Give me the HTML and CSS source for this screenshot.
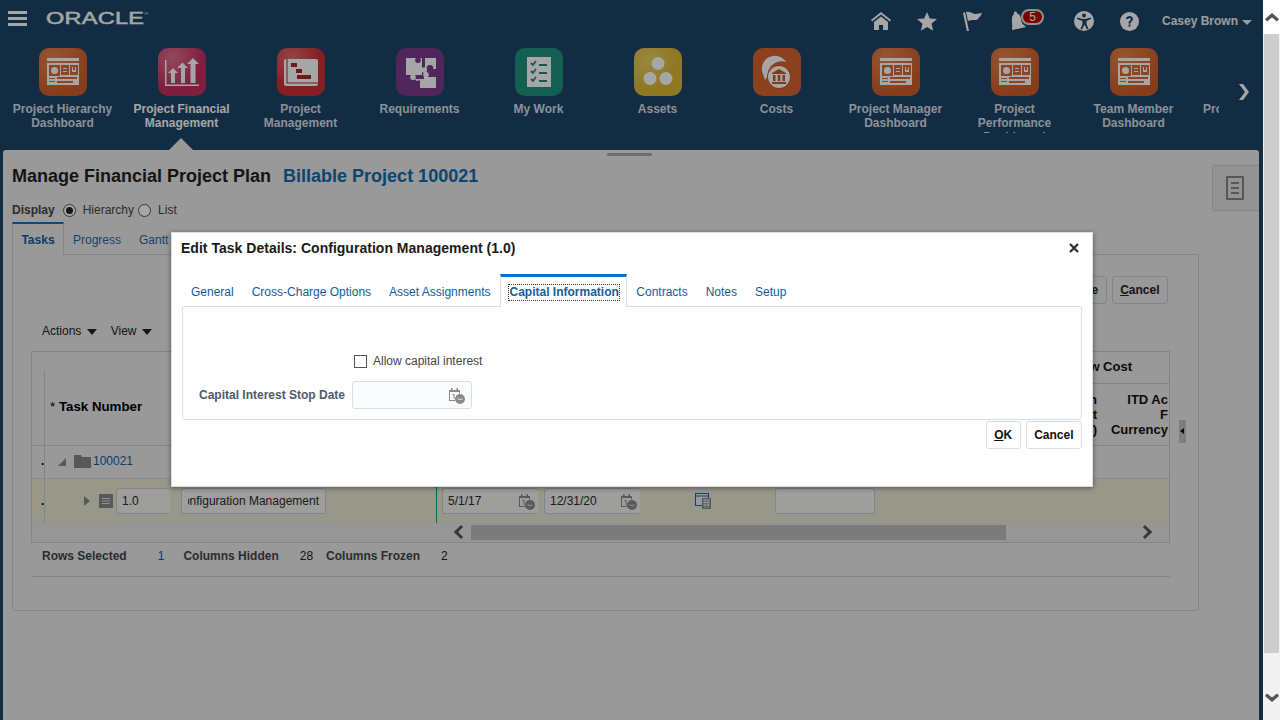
FILE: index.html
```html
<!DOCTYPE html>
<html lang="en">
<head>
    <meta charset="UTF-8">
    <title>Manage Financial Project Plan</title>
    <link rel="stylesheet" href="styles.css">
</head>
<body>
    <svg class="defs" width="0" height="0">
        <symbol id="dash" viewBox="0 0 48 48">
            <rect x="8" y="10" width="32" height="3" fill="#fff"/>
            <rect x="8" y="15" width="32" height="22" fill="#fff"/>
            <rect x="10" y="17" width="11" height="11" fill="currentColor"/>
            <circle cx="15.5" cy="22.5" r="3.5" fill="#fff"/>
            <rect x="22" y="17" width="8" height="10" fill="currentColor"/>
            <rect x="24" y="20" width="4" height="1" fill="#fff"/>
            <rect x="24" y="23" width="4" height="1" fill="#fff"/>
            <rect x="31" y="17" width="8" height="10" fill="currentColor"/>
            <path d="M33 19v5h4v-5h-1v3h-2v-3z" fill="#fff"/>
            <rect x="10" y="30" width="6" height="1" fill="currentColor"/>
            <rect x="10" y="33" width="6" height="1" fill="currentColor"/>
            <rect x="18" y="29" width="20" height="2" fill="currentColor"/>
            <rect x="18" y="33" width="16" height="2" fill="currentColor"/>
        </symbol>
        <symbol id="cal" viewBox="0 0 17 17">
            <path d="M1 3h2V1h1.500v2h4V1H10v2h2v3.500h-1V5H2v8h5v1H1z" fill="#8a8a8a"/>
            <path d="M4.500 7H6.500v5H5.500V8H4.500z" fill="#8a8a8a"/>
            <circle cx="12" cy="12" r="5" fill="#8a8a8a"/>
            <path d="M9.500 11.500l2.500 1.200 2.500-.7" fill="none" stroke="#e4e4e4"/>
        </symbol>
    </svg>

    <div class="app">
        <header class="topbar">
            <svg class="burger" width="19" height="15" viewBox="0 0 19 15"><path d="M0 0h19v3H0zM0 6h19v3H0zM0 12h19v3H0z" fill="#fff"/></svg>
            <div class="logo">ORACLE<sup>®</sup></div>
            <div class="topicons">
                <svg class="ti" width="20" height="18" viewBox="0 0 20 18"><path d="M10 0L0 8l1 1.500L10 2.500l9 7 1-1.500zM3 10v8h5v-5h4v5h5v-8L10 4.500z" fill="#fff"/></svg>
                <svg class="ti" width="20" height="19" viewBox="0 0 20 19"><path d="M10 0l2.800 6.500 7.200.6-5.500 4.600 1.700 7L10 15l-6.200 3.700 1.700-7L0 7.100l7.200-.6z" fill="#fff"/></svg>
                <svg class="ti" width="20" height="20" viewBox="0 0 20 20"><path d="M0 2l2-1 4 19-2 .5zM3 1c4-1 6 2 9 2s5-1 7-1c-1 3-3 4-4 6-2 2-6 0-10 2z" fill="#fff"/></svg>
                <div class="bell">
                    <svg width="19" height="20" viewBox="0 0 19 20"><path d="M4 1c2-1 3 0 3 1.500 4 1 4 5 4.500 8 .5 2.500 3 4 4.500 5.500L2 19c0-2 .5-4 0-7 0-4-.5-6.500 2-9z" fill="#fff"/></svg>
                    <span class="badge">5</span>
                </div>
                <svg class="ti" width="20" height="20" viewBox="0 0 20 20"><circle cx="10" cy="10" r="10" fill="#fff"/><circle cx="10" cy="4.500" r="2" fill="#1c4467"/><path d="M3.500 6.500l5 1.500h3l5-1.500.5 1.500-4.500 2v3l2 5-1.500.5-2.500-5-2.500 5-1.500-.5 2-5v-3L3 8z" fill="#1c4467"/></svg>
                <svg class="ti" width="19" height="19" viewBox="0 0 19 19"><circle cx="9.500" cy="9.500" r="9.500" fill="#fff"/><path d="M6 7c0-2 2-3 3.500-3s3.500 1 3.500 3-2.500 2.500-2.500 4.500h-2c0-3 2.500-3 2.500-4.500 0-1-3-1-3 0z" fill="#1c4467"/><rect x="8.500" y="12.500" width="2" height="2" fill="#1c4467"/></svg>
                <span class="username">Casey Brown</span>
                <span class="caret"></span>
            </div>
        </header>

        <nav class="tray">
            <a class="tile"><span class="tile-icon orange"><svg width="48" height="48"><use href="#dash"/></svg></span>Project Hierarchy Dashboard</a>
            <a class="tile active"><span class="tile-icon pink">
                <svg width="48" height="48" viewBox="0 0 48 48"><path d="M7 12v26h34v-1.500H8.500V12z" fill="#fff"/><path d="M10 25l5-5 5 5h-3v10h-4V25zM19 20l5.500-5.500L30 20h-3v15h-4V20zM29 16l6-6 6 6h-3.500v19h-5V16z" fill="#fff"/></svg>
            </span>Project Financial Management</a>
            <a class="tile"><span class="tile-icon red">
                <svg width="48" height="48" viewBox="0 0 48 48"><rect x="7" y="11" width="34" height="27" rx="2" fill="#fff"/><path d="M9.500 11v24.500H41v-1H10.500V11z" fill="#a52a2a"/><rect x="14" y="15" width="6" height="4" fill="#a52a2a"/><rect x="19" y="21" width="6" height="4" fill="#a52a2a"/><rect x="20" y="27" width="14" height="4" fill="#a52a2a"/></svg>
            </span>Project Management</a>
            <a class="tile"><span class="tile-icon purple">
                <svg width="48" height="48" viewBox="0 0 48 48"><path d="M10 10h10c-2 3 0 5 2 5s4-2 2-5h2v10c3-2 5 0 5 2 0 3-3 4-5 2v3H19c2 3 0 5-2 5s-4-2-2-5h-5z" fill="#fff"/><path d="M29 10h11v11h-3c1-3-1-4-3-4s-4 1-3 4h-2z" fill="#fff"/><path d="M28 29c-2-3 0-5 2-5s4 2 2 5h8v11H24v-8c-3 2-5 0-5-1h9z" fill="#fff"/></svg>
            </span>Requirements</a>
            <a class="tile"><span class="tile-icon teal">
                <svg width="48" height="48" viewBox="0 0 48 48"><rect x="12" y="9" width="24" height="30" fill="#fff"/><path d="M16 15l2 2 3-4M16 23l2 2 3-4M16 31l2 2 3-4" fill="none" stroke="#1f8a7c" stroke-width="1.800"/><path d="M24 16h8v2h-8zM24 24h8v2h-8zM24 32h8v2h-8z" fill="#1f8a7c"/></svg>
            </span>My Work</a>
            <a class="tile"><span class="tile-icon yellow">
                <svg width="48" height="48" viewBox="0 0 48 48"><circle cx="24" cy="15.500" r="6.500" fill="#fff"/><circle cx="16" cy="30.500" r="6.500" fill="#fff"/><circle cx="32" cy="30.500" r="6.500" fill="#fff"/></svg>
            </span>Assets</a>
            <a class="tile"><span class="tile-icon rust">
                <svg width="48" height="48" viewBox="0 0 48 48"><path d="M10 26A13 13 0 0 1 33 14c-9-3-19 4-18 14l-3 4z" fill="#fff"/><circle cx="26" cy="29" r="12" fill="#c35a2b"/><circle cx="26" cy="29" r="11" fill="#fff"/><path d="M26 21l7 4v1H19v-1zM20 27h2.500v6H20zM24.800 27h2.500v6h-2.500zM29.500 27H32v6h-2.500zM19 34h14v2H19z" fill="#c35a2b"/></svg>
            </span>Costs</a>
            <a class="tile"><span class="tile-icon orange"><svg width="48" height="48"><use href="#dash"/></svg></span>Project Manager Dashboard</a>
            <a class="tile"><span class="tile-icon orange"><svg width="48" height="48"><use href="#dash"/></svg></span>Project Performance Dashboard</a>
            <a class="tile"><span class="tile-icon orange"><svg width="48" height="48"><use href="#dash"/></svg></span>Team Member Dashboard</a>
            <a class="tile tile-cut"><span class="tile-label">Project</span></a>
            <svg class="tray-next" width="12" height="16" viewBox="0 0 12 16"><path d="M1 0h4l6 8-6 8H1l6-8z" fill="#fff"/></svg>
        </nav>

        <main class="content">
            <div class="splitter"></div>
            <div class="page">
                <div class="title-row">
                    <h1>Manage Financial Project Plan</h1>
                    <span class="project-name">Billable Project 100021</span>
                </div>
                <div class="display-row">
                    <span class="display-label">Display</span>
                    <span class="radio on"></span><span>Hierarchy</span>
                    <span class="radio"></span><span>List</span>
                </div>
                <div class="tabs">
                    <a class="tab current">Tasks</a>
                    <a class="tab">Progress</a>
                    <a class="tab">Gantt</a>
                </div>
                <section class="panel">
                    <div class="panel-actions">
                        <button class="btn">Save</button>
                        <button class="btn"><u>C</u>ancel</button>
                    </div>
                    <div class="toolbar">
                        <span>Actions <i class="down"></i></span>
                        <span>View <i class="down"></i></span>
                    </div>
                    <div class="table-wrap">
                        <div class="grid">
                            <div class="grid-head">
                                <div class="head-task"><span class="star">*</span> Task Number</div>
                                <div class="head-cols">
                                    <div class="head-group"><span>Flow Cost</span></div>
                                    <div class="head-sub">
                                        <div class="head-col1">n<br>t<br>)</div>
                                        <div class="head-col2">ITD Ac<br>F<br>Currency</div>
                                    </div>
                                </div>
                            </div>
                            <div class="grid-row">
                                <span class="gutter">.</span>
                                <span class="tri-open"></span>
                                <svg class="folder" width="17" height="13" viewBox="0 0 17 13"><path d="M0 0h7l1 2h9v11H0z" fill="#888"/></svg>
                                <a class="link">100021</a>
                            </div>
                            <div class="grid-row selected">
                                <span class="gutter">.</span>
                                <span class="tri-closed"></span>
                                <svg class="task-icon" width="14" height="14" viewBox="0 0 14 14"><rect width="14" height="14" fill="#888"/><path d="M3 4h8v1H3zM3 6.500h8v1H3zM3 9h8v1H3z" fill="#ddd"/></svg>
                                <span class="cell-input num">1.0</span>
                                <span class="cell-input name"><span class="name-clip">Configuration Management</span></span>
                                <span class="frozen-line"></span>
                                <span class="cell-input date">5/1/17<svg width="17" height="17"><use href="#cal"/></svg></span>
                                <span class="cell-input date">12/31/20<svg width="17" height="17"><use href="#cal"/></svg></span>
                                <svg class="grid-icon" width="16" height="16" viewBox="0 0 16 16"><rect x=".5" y=".5" width="13" height="12" fill="#e8eef6" stroke="#2a5fa8"/><path d="M1 3h12" stroke="#2a5fa8"/><rect x="7" y="5" width="9" height="11" fill="#8a8a8a"/><path d="M8 7h7M8 9.500h7M8 12h7M10 6v9M13 6v9" stroke="#e4e4e4"/></svg>
                                <span class="cell-input blank"></span>
                            </div>
                            <div class="grid-scroll">
                                <span class="arrow-left"></span>
                                <span class="thumb"></span>
                                <span class="arrow-right"></span>
                            </div>
                        </div>
                        <span class="collapse"></span>
                    </div>
                    <div class="grid-info">
                        <b>Rows Selected</b><a>1</a>
                        <b>Columns Hidden</b><span>28</span>
                        <b>Columns Frozen</b><span>2</span>
                    </div>
                    <div class="info-line"></div>
                </section>
            </div>
            <div class="side-tab">
                <svg width="18" height="24" viewBox="0 0 18 24"><path d="M0 0h18v24H0zM2 2v20h14V2z" fill="#888"/><path d="M5 6h8v2H5zM5 11h8v2H5zM5 16h8v2H5z" fill="#888"/></svg>
            </div>
        </main>
        <div class="glass"></div>
        <div class="dialog">
            <div class="dialog-head">
                <h2>Edit Task Details: Configuration Management (1.0)</h2>
                <svg width="10" height="10" viewBox="0 0 10 10"><path d="M1 1l8 8M9 1l-8 8" stroke="#333" stroke-width="2.400"/></svg>
            </div>
            <div class="dialog-tabs">
                <a class="dtab">General</a>
                <a class="dtab">Cross-Charge Options</a>
                <a class="dtab">Asset Assignments</a>
                <a class="dtab picked"><span>Capital Information</span></a>
                <a class="dtab">Contracts</a>
                <a class="dtab">Notes</a>
                <a class="dtab">Setup</a>
            </div>
            <div class="dialog-panel">
                <div class="check-row"><span class="checkbox"></span><span>Allow capital interest</span></div>
                <div class="date-row">
                    <label>Capital Interest Stop Date</label>
                    <span class="date-input"><svg width="17" height="17"><use href="#cal"/></svg></span>
                </div>
            </div>
            <div class="dialog-actions">
                <button class="btn light"><u>O</u>K</button>
                <button class="btn light">Cancel</button>
            </div>
        </div>
    </div>

    <div class="scrollbar">
        <div class="sb-btn"><svg width="14" height="9" viewBox="0 0 14 9"><path d="M7 0l7 6-2 2.500-5-4-5 4L0 6z" fill="#555"/></svg></div>
        <div class="sb-track"></div>
        <div class="sb-low"><svg width="14" height="9" viewBox="0 0 14 9"><path d="M7 9L0 3l2-2.500 5 4 5-4L14 3z" fill="#555"/></svg></div>
    </div>
</body>
</html>
```

FILE: styles.css
```css
html, body {
    margin: 0;
    height: 720px;
    overflow: hidden;
}
body {
    display: flex;
    font-family: "Liberation Sans", Arial, sans-serif;
    font-size: 12px;
    color: #333;
    background-color: #1c4467;
}
a {
    color: inherit;
    text-decoration: none;
}
button {
    font-family: inherit;
}
.defs {
    position: absolute;
}
.app {
    position: relative;
    width: 1263px;
    height: 720px;
    overflow: hidden;
    background-color: #1c4467;
}

/* top bar */
.topbar {
    display: flex;
    align-items: center;
    height: 44px;
    padding-left: 8px;
    box-sizing: border-box;
    color: #fff;
}
.burger {
    margin-top: -8px;
}
.logo {
    margin-left: 19px;
    margin-top: -6px;
    font-size: 17px;
    -webkit-text-stroke: .5px #fff;
    letter-spacing: .2px;
    transform: scaleX(1.38);
    transform-origin: left;
    line-height: 20px;
    color: #fff;
}
.logo sup {
    font-size: 4px;
    -webkit-text-stroke: 0;
    vertical-align: 9px;
    line-height: 0;
}
.topicons {
    display: flex;
    align-items: center;
    position: absolute;
    left: 871px;
    top: 11px;
}
.ti {
    display: block;
    margin-right: 26px;
}
.bell {
    position: relative;
    width: 19px;
    height: 20px;
    margin-left: 1px;
    margin-right: 45px;
}
.badge {
    position: absolute;
    left: 11px;
    top: -2px;
    box-sizing: border-box;
    width: 23px;
    height: 16px;
    border: 2px solid #ddd;
    border-radius: 8px;
    background-color: #c00000;
    color: #fff;
    font-size: 12px;
    line-height: 12px;
    text-align: center;
}
.username {
    margin-left: -3px;
    font-weight: bold;
    color: #eef1f4;
}
.caret {
    margin-left: 4px;
    margin-top: 2px;
    border-left: 5px solid transparent;
    border-right: 5px solid transparent;
    border-top: 5px solid #eef1f4;
}

/* app tray */
.tray {
    display: flex;
    position: relative;
    height: 106px;
    padding: 4px 0 0 3px;
    box-sizing: border-box;
    overflow: hidden;
}
.tile {
    flex: 0 0 119px;
    box-sizing: border-box;
    height: 85px;
    padding: 0 6px;
    overflow: hidden;
    text-align: center;
    font-weight: bold;
    line-height: 14px;
    color: #d8dfe6;
}
.tile.active {
    color: #fff;
    overflow: visible;
    position: relative;
}
.tile.active::after {
    content: "";
    position: absolute;
    left: 47px;
    top: 90px;
    border-left: 12px solid transparent;
    border-right: 12px solid transparent;
    border-bottom: 12px solid #ebebeb;
}
.tile-icon {
    display: block;
    width: 48px;
    height: 48px;
    margin: 0 auto 6px;
    border-radius: 10px;
    color: #d86a36;
}
.tile-icon svg {
    display: block;
}
.orange { background: #d6652f radial-gradient(circle at 30% 20%, #e8834c, #d05f2c 70%); }
.pink { background: #c6395f radial-gradient(circle at 30% 20%, #e2708e, #c42f60 60%); }
.red { background: #c8333a radial-gradient(circle at 30% 20%, #e06a6a, #cc3037 55%); }
.purple { background: #7b3b8f; }
.teal { background: #20927f; }
.yellow { background: #e1bc38 radial-gradient(circle at 30% 25%, #ecd05e, #dcb834 60%); }
.rust { background: #d6652f; }
.tile-cut {
    flex: 0 0 16px;
    padding: 54px 0 0 0;
    margin-left: 10px;
    text-align: left;
    white-space: nowrap;
}
.tray-next {
    position: absolute;
    left: 1238px;
    top: 40px;
}

/* page content */
.content {
    position: relative;
    width: 1256px;
    height: 570px;
    margin-left: 3px;
    background-color: #ebebeb;
    border-radius: 3px 3px 0 0;
    isolation: isolate;
}
.splitter {
    position: absolute;
    left: 604px;
    top: 3px;
    width: 45px;
    height: 3px;
    border-radius: 2px;
    background-color: #aaa;
}
.page {
    width: 1187px;
    padding: 14px 0 0 9px;
}
.title-row {
    display: flex;
    align-items: center;
    height: 24px;
}
.title-row h1 {
    margin: 0;
    font-size: 18px;
    color: #1f1f1f;
}
.project-name {
    margin-left: 12px;
    font-size: 18px;
    font-weight: bold;
    color: #0e6cae;
}
.display-row {
    display: flex;
    align-items: center;
    height: 20px;
    margin-top: 12px;
    color: #444;
}
.display-label {
    font-weight: bold;
    margin-right: 8px;
}
.radio {
    position: relative;
    width: 11px;
    height: 11px;
    margin-right: 7px;
    border: 1px solid #555;
    border-radius: 50%;
    background-color: #fff;
}
.radio + span + .radio {
    margin-left: 4px;
}
.radio.on::after {
    content: "";
    position: absolute;
    left: 2px;
    top: 2px;
    width: 7px;
    height: 7px;
    border-radius: 50%;
    background-color: #222;
}
.tabs {
    display: flex;
    height: 32px;
    margin-top: 2px;
}
.tab {
    padding: 11px 9px 0;
    color: #1f6aa5;
}
.tab.current {
    box-sizing: border-box;
    width: 52px;
    height: 33px;
    padding: 9px 0 0;
    text-align: center;
    position: relative;
    z-index: 1;
    border-top: 2px solid #0572ce;
    border-left: 1px solid #c4ced7;
    border-right: 1px solid #c4ced7;
    background-color: #ebebeb;
    font-weight: bold;
    color: #145c9e;
}
.panel {
    box-sizing: border-box;
    height: 357px;
    border: 1px solid #c4ced7;
    border-radius: 3px;
}
.panel-actions {
    display: flex;
    justify-content: flex-end;
    gap: 5px;
    height: 28px;
    padding-top: 21px;
    margin-right: 30px;
}
.btn {
    box-sizing: border-box;
    height: 28px;
    padding: 0 7.5px;
    border: 1px solid #c4ced7;
    border-radius: 3px;
    background-color: #fff;
    font-size: 12px;
    color: #1f1f1f;
}
.panel-actions .btn {
    background-color: transparent;
    font-weight: bold;
    color: #222;
}
.toolbar {
    display: flex;
    gap: 14px;
    height: 16px;
    margin-top: 19px;
    margin-left: 29px;
    line-height: 16px;
    color: #222;
}
.down {
    display: inline-block;
    margin-left: 2px;
    border-left: 5px solid transparent;
    border-right: 5px solid transparent;
    border-top: 6px solid #222;
}
.table-wrap {
    display: flex;
    margin-top: 12px;
    margin-left: 18px;
}
.grid {
    box-sizing: border-box;
    width: 1139px;
    height: 192px;
    border: 1px solid #c4ced7;
    overflow: hidden;
}
.grid-head {
    display: flex;
    justify-content: space-between;
    height: 93px;
    border-bottom: 1px solid #c4ced7;
}
.head-task {
    align-self: flex-end;
    box-sizing: border-box;
    height: 75px;
    margin-left: 12px;
    padding: 29px 0 0 5px;
    border-left: 1px solid #c4ced7;
    font-size: 13.3px;
    font-weight: bold;
    color: #000;
}
.star {
    font-weight: normal;
}
.head-cols {
    width: 90px;
    font-weight: bold;
    color: #111;
}
.head-group {
    display: flex;
    justify-content: flex-end;
    height: 31px;
    line-height: 30px;
    border-bottom: 1px solid #c4ced7;
    white-space: nowrap;
    padding-right: 37px;
    font-size: 13px;
}
.head-sub {
    display: flex;
    padding-top: 8px;
    line-height: 15px;
    font-size: 13px;
}
.head-col1 {
    width: 18px;
    text-align: right;
}
.head-col2 {
    width: 71px;
    text-align: right;
}
.grid-row {
    display: flex;
    align-items: center;
    height: 32px;
    border-bottom: 1px solid #d4d9de;
}
.gutter {
    box-sizing: border-box;
    width: 13px;
    align-self: stretch;
    border-right: 1px solid #c4ced7;
    padding: 8px 0 0 9px;
    font-weight: bold;
    color: #000;
}
.tri-open {
    margin-left: 13px;
    width: 0;
    height: 0;
    border-bottom: 8px solid #888;
    border-left: 8px solid transparent;
}
.folder {
    margin-left: 8px;
    margin-top: -1px;
}
.link {
    margin-left: 2px;
    margin-top: -2px;
    color: #145c9e;
}
.selected {
    height: 44px;
    background-color: #e9e9d5;
    border-bottom: 0;
}
.selected .gutter {
    padding-top: 15px;
}
.tri-closed {
    margin-left: 39px;
    border-top: 5px solid transparent;
    border-bottom: 5px solid transparent;
    border-left: 6px solid #888;
}
.task-icon {
    margin-left: 9px;
}
.cell-input {
    display: flex;
    align-items: center;
    justify-content: space-between;
    box-sizing: border-box;
    height: 26px;
    border: 1px solid #c4ced7;
    border-radius: 3px;
    background-color: #f3f3f1;
    overflow: hidden;
    color: #2a2a2a;
    padding-left: 5px;
}
.num {
    width: 54px;
    margin-left: 3px;
    border-right: 0;
}
.name {
    width: 145px;
    margin-left: 11px;
    padding: 0 6px 0 6px;
    white-space: nowrap;
}
.name-clip {
    display: flex;
    justify-content: flex-end;
    width: 131px;
    overflow: hidden;
}
.frozen-line {
    align-self: stretch;
    width: 1px;
    margin-left: 110px;
    background-color: #0f97a5;
}
.date {
    width: 96px;
    margin-left: 5px;
    border-right: 0;
    padding-right: 3px;
}
.date + .date {
    margin-left: 6px;
}
.grid-icon {
    margin-left: 55px;
}
.blank {
    width: 100px;
    margin-left: 64px;
}
.grid-scroll {
    position: relative;
    height: 19px;
    background-color: #e6e6e6;
    border-top: 1px solid #e0e0e0;
    box-sizing: border-box;
}
.thumb {
    position: absolute;
    left: 439px;
    top: 1px;
    width: 535px;
    height: 15px;
    background-color: #bdbdbd;
}
.arrow-left,
.arrow-right {
    position: absolute;
    top: 3px;
    width: 7px;
    height: 7px;
    border-left: 3px solid #555;
    border-bottom: 3px solid #555;
    transform: rotate(45deg);
}
.arrow-left {
    left: 424px;
}
.arrow-right {
    left: 1108px;
    transform: rotate(225deg);
}
.collapse {
    position: relative;
    width: 7px;
    height: 23px;
    margin-top: 69px;
    margin-left: 9px;
    background-color: #c2c2c2;
}
.collapse::after {
    content: "";
    position: absolute;
    left: 1px;
    top: 8px;
    border-top: 3px solid transparent;
    border-bottom: 3px solid transparent;
    border-right: 4px solid #111;
}
.grid-info {
    display: flex;
    margin: 5px 0 0 29px;
    line-height: 16px;
    color: #222;
}
.grid-info b {
    color: #444;
}
.grid-info a {
    margin: 0 19px 0 31px;
    color: #145c9e;
}
.grid-info span:nth-of-type(1) {
    margin: 0 13px 0 21px;
}
.grid-info span:nth-of-type(2) {
    margin-left: 21px;
}
.info-line {
    width: 1139px;
    height: 1px;
    margin: 12px 0 0 18px;
    background-color: #c4ced7;
}
.side-tab {
    position: absolute;
    left: 1209px;
    top: 15px;
    box-sizing: border-box;
    width: 47px;
    height: 46px;
    padding: 10px 0 0 13px;
    border: 1px solid #c4ced7;
    border-right: 0;
    border-radius: 3px 0 0 3px;
    background-color: #e2e2e2;
}

/* dialog over the page */
.glass {
    position: absolute;
    inset: 0;
    background-color: rgba(0, 0, 0, .35);
}
.dialog {
    position: absolute;
    left: 171px;
    top: 232px;
    box-sizing: border-box;
    width: 922px;
    height: 255px;
    border: 1px solid #d6dfe6;
    background-color: #fff;
    box-shadow: 0 1px 5px rgba(0, 0, 0, .45);
}
.dialog-head {
    display: flex;
    justify-content: space-between;
    align-items: center;
    height: 30px;
    padding: 0 13px 0 9px;
}
.dialog-head h2 {
    margin: 0;
    font-size: 14px;
    letter-spacing: .02px;
    color: #1a1a1a;
}
.dialog-tabs {
    display: flex;
    height: 32px;
    margin-top: 11px;
    padding-left: 10px;
}
.dtab {
    padding: 11px 9px 0;
    color: #145c9e;
}
.picked {
    box-sizing: border-box;
    height: 33px;
    margin-left: 1px;
    padding: 8px 7.5px 0 8px;
    position: relative;
    z-index: 1;
    border-top: 3px solid #0572ce;
    border-left: 1px solid #d6dfe6;
    border-right: 1px solid #d6dfe6;
    background-color: #fff;
    font-weight: bold;
    color: #145c9e;
}
.picked span {
    display: block;
    line-height: 15px;
    outline: 1px dotted #333;
}
.dialog-panel {
    box-sizing: border-box;
    width: 900px;
    height: 114px;
    margin-left: 10px;
    border: 1px solid #d6dfe6;
    border-radius: 3px;
    padding-top: 47px;
}
.check-row {
    display: flex;
    align-items: center;
    height: 14px;
    padding-left: 171px;
    color: #444;
}
.checkbox {
    box-sizing: border-box;
    width: 13px;
    height: 13px;
    margin-right: 6px;
    border: 1px solid #555;
}
.date-row {
    display: flex;
    align-items: center;
    margin-top: 13px;
}
.date-row label {
    width: 162px;
    text-align: right;
    font-weight: bold;
    color: #4f5b68;
}
.date-input {
    display: flex;
    justify-content: flex-end;
    align-items: center;
    box-sizing: border-box;
    width: 120px;
    height: 28px;
    margin-left: 7px;
    padding-right: 6px;
    border: 1px solid #d6dfe6;
    border-radius: 3px;
    background-color: #fbfcfd;
}
.dialog-actions {
    display: flex;
    justify-content: flex-end;
    gap: 5px;
    width: 900px;
    margin: 1px 0 0 10px;
}
.btn.light {
    border-color: #d6dfe6;
    color: #111;
    font-weight: bold;
    font-size: 12px;
}

/* browser scrollbar */
.scrollbar {
    display: flex;
    flex-direction: column;
    width: 17px;
    height: 720px;
    background-color: #f1f1f1;
}
.sb-btn {
    display: flex;
    justify-content: center;
    align-items: center;
    height: 34px;
    background-color: #fff;
}
.sb-track {
    height: 619px;
    margin: 0 1px;
    background-color: #cdcdcd;
}
.sb-low {
    display: flex;
    justify-content: center;
    align-items: flex-end;
    flex: 1;
    padding-bottom: 18px;
}
```
